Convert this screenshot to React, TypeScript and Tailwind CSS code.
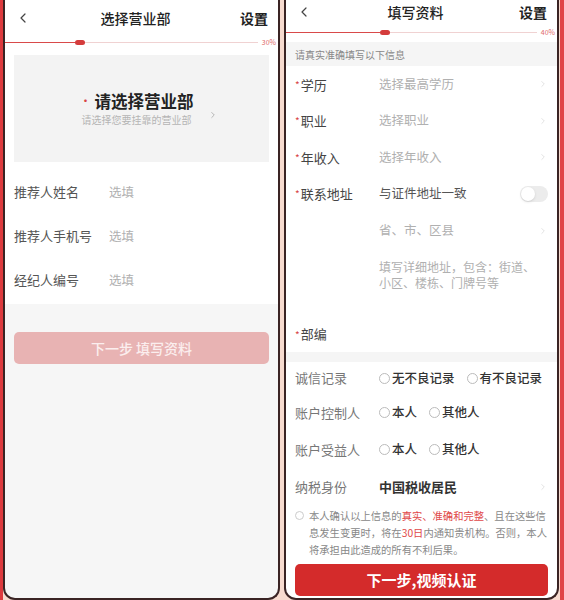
import { ChevronLeft, ChevronRight } from 'lucide-react';

const font = { fontFamily: '"Noto Sans CJK SC", "Noto Sans", sans-serif' };

function Header({ title, h }: { title: string; h: string }) {
  return (
    <div className={`flex items-center justify-between px-[10px] ${h}`}>
      <ChevronLeft className="w-[16px] h-[16px] text-[#444]" strokeWidth={1.8} />
      <span className="text-[14px] font-medium text-[#222]">{title}</span>
      <span className="text-[14px] font-semibold text-[#222]">设置</span>
    </div>
  );
}

function Progress({ filled, label, h }: { filled: string; label: string; h: string }) {
  return (
    <div className={`flex items-center ${h}`}>
      <div className="flex-1 flex items-center">
        <div className={`h-[1px] bg-[#d94a4a] ${filled}`} />
        <div className="w-[10px] h-[5px] rounded-full bg-[#d43c3c]" />
        <div className="flex-1 h-[1px] bg-[#f0d2d2]" />
      </div>
      <span className="ml-[4px] mr-[2px] text-[7px] text-[#e06a6a] leading-none">{label}</span>
    </div>
  );
}

function LeftPhone() {
  const rows = ['推荐人姓名', '推荐人手机号', '经纪人编号'];
  return (
    <div className="w-[277px] h-[600px] shrink-0 border-x-2 border-b-2 border-[#3a2424] rounded-b-[12px] bg-[#f6f6f6] overflow-hidden">
      <div className="bg-white">
        <Header title="选择营业部" h="h-[36px]" />
        <Progress filled="w-[70px]" label="30%" h="h-[12px]" />
        <div className="h-[7px]" />
      </div>
      <div className="bg-white px-[9px]">
        <div className="h-[107px] bg-[#f3f3f3] flex items-center justify-center">
          <div className="flex flex-col items-center ml-[14px]">
            <div className="flex items-center leading-[22px]">
              <span className="text-[#d84444] text-[12px] mr-[3px]">•</span>
              <span className="text-[16.5px] font-bold text-[#222]">请选择营业部</span>
            </div>
            <span className="text-[10px] leading-[14px] text-[#b5b5b5] mt-[1px]">请选择您要挂靠的营业部</span>
          </div>
          <ChevronRight className="w-[10px] h-[10px] text-[#aaa] ml-[14px] mt-[12px]" />
        </div>
        <div className="flex flex-col pt-[8px] pb-[2px]">
          {rows.map((r) => (
            <div key={r} className="h-[44px] flex items-center">
              <span className="w-[95px] shrink-0 text-[13px] text-[#555]">{r}</span>
              <span className="text-[12.5px] text-[#b0b0b0]">选填</span>
            </div>
          ))}
        </div>
      </div>
      <div className="px-[9px] pt-[28px]">
        <div className="h-[32px] rounded-[5px] bg-[#e8b3b3] flex items-center justify-center text-[14px] font-medium text-[#fbeeee]">
          下一步 填写资料
        </div>
      </div>
    </div>
  );
}

function Req({ children }: { children: string }) {
  return (
    <span className="w-[84px] shrink-0 text-[13px] text-[#444] flex items-center">
      <span className="text-[#d84444] text-[10px] mr-[1px]">*</span>
      {children}
    </span>
  );
}

function Label({ children }: { children: string }) {
  return <span className="w-[84px] shrink-0 text-[13px] text-[#777]">{children}</span>;
}

function Radio({ label }: { label: string }) {
  return (
    <span className="flex items-center mr-[12px] whitespace-nowrap">
      <span className="w-[11px] h-[11px] rounded-full border border-[#bbb] mr-[2px] shrink-0" />
      <span className="text-[12.5px] text-[#333] font-medium">{label}</span>
    </span>
  );
}

function RightPhone() {
  return (
    <div className="w-[275px] h-[600px] shrink-0 border-x-2 border-b-2 border-[#3a2424] rounded-b-[12px] bg-white overflow-hidden">
      <Header title="填写资料" h="h-[24px]" />
      <Progress filled="w-[94px]" label="40%" h="h-[16px]" />
      <div className="h-[24px] mt-[2px] bg-[#f5f5f5] flex items-center px-[9px] text-[10px] text-[#888]">
        请真实准确填写以下信息
      </div>
      <div className="px-[9px]">
        {[
          ['学历', '选择最高学历'],
          ['职业', '选择职业'],
          ['年收入', '选择年收入'],
        ].map(([l, v]) => (
          <div key={l} className="h-[36.5px] flex items-center">
            <Req>{l}</Req>
            <span className="flex-1 text-[12.5px] text-[#b0b0b0]">{v}</span>
            <ChevronRight className="w-[10px] h-[10px] text-[#ddd]" />
          </div>
        ))}
        <div className="h-[36.5px] flex items-center">
          <Req>联系地址</Req>
          <span className="flex-1 text-[12.5px] text-[#555]">与证件地址一致</span>
          <span className="w-[28px] h-[16px] rounded-full bg-[#ececec] flex items-center px-[1px]">
            <span className="w-[14px] h-[14px] rounded-full bg-white shadow-sm" />
          </span>
        </div>
        <div className="h-[37px] flex items-center pl-[84px]">
          <span className="flex-1 text-[12.5px] text-[#b0b0b0]">省、市、区县</span>
          <ChevronRight className="w-[10px] h-[10px] text-[#ddd]" />
        </div>
        <div className="h-[67px] pl-[84px] pt-[10px] text-[12px] leading-[16px] text-[#b0b0b0]">
          <div className="whitespace-nowrap">填写详细地址，包含：街道、</div>
          <div className="whitespace-nowrap">小区、楼栋、门牌号等</div>
        </div>
        <div className="h-[36px] flex items-center">
          <Req>部编</Req>
        </div>
      </div>
      <div className="h-[10px] bg-[#f5f5f5]" />
      <div className="px-[9px]">
        <div className="h-[32px] flex items-center">
          <Label>诚信记录</Label>
          <Radio label="无不良记录" />
          <Radio label="有不良记录" />
        </div>
        <div className="h-[37px] flex items-center">
          <Label>账户控制人</Label>
          <Radio label="本人" />
          <Radio label="其他人" />
        </div>
        <div className="h-[37px] flex items-center">
          <Label>账户受益人</Label>
          <Radio label="本人" />
          <Radio label="其他人" />
        </div>
        <div className="h-[37px] flex items-center">
          <Label>纳税身份</Label>
          <span className="flex-1 text-[13px] font-semibold text-[#333]">中国税收居民</span>
          <ChevronRight className="w-[10px] h-[10px] text-[#ddd]" />
        </div>
        <div className="flex pt-[2px]">
          <span className="w-[9px] h-[9px] rounded-full border border-[#ccc] mt-[4px] mr-[5px] shrink-0" />
          <div className="text-[10.3px] leading-[17px] text-[#888]">
            <div className="whitespace-nowrap">
              本人确认以上信息的<span className="text-[#e04848]">真实、准确和完整</span>、且在这些信
            </div>
            <div className="whitespace-nowrap">
              息发生变更时，将在<span className="text-[#e04848]">30日</span>内通知贵机构。否则，本人
            </div>
            <div className="whitespace-nowrap">将承担由此造成的所有不利后果。</div>
          </div>
        </div>
        <div className="mt-[6px] h-[32px] rounded-[5px] bg-[#d42b2b] flex items-center justify-center text-[15px] font-semibold text-white">
          下一步,视频认证
        </div>
      </div>
    </div>
  );
}

export default function App() {
  return (
    <div className="w-[564px] h-[600px] flex bg-[#f7dbcf] overflow-hidden" style={font}>
      <div className="w-[3px] shrink-0 bg-[#dd3a3e]" />
      <LeftPhone />
      <div className="w-[4px] shrink-0" />
      <RightPhone />
      <div className="flex-1 ml-[1px] bg-[#e04448]" />
    </div>
  );
}
